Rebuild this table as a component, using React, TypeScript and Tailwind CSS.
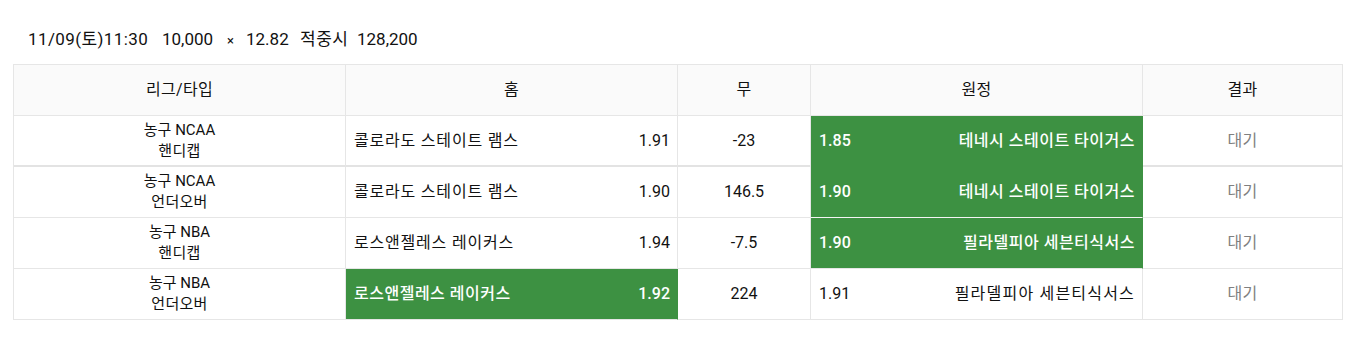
import React from 'react'

interface Row {
  league: string
  type: string
  home: string
  homeOdds: string
  mid: string
  awayOdds: string
  away: string
  result: string
  pick: 'home' | 'away'
  border: string
  awayBorder: string
}

const rows: Row[] = [
  {
    league: '농구 NCAA', type: '핸디캡', home: '콜로라도 스테이트 램스', homeOdds: '1.91', mid: '-23',
    awayOdds: '1.85', away: '테네시 스테이트 타이거스', result: '대기', pick: 'away',
    border: 'border-b-2 border-b-[#e3e3e3]', awayBorder: 'border-b-2 border-b-[#3d9142]',
  },
  {
    league: '농구 NCAA', type: '언더오버', home: '콜로라도 스테이트 램스', homeOdds: '1.90', mid: '146.5',
    awayOdds: '1.90', away: '테네시 스테이트 타이거스', result: '대기', pick: 'away',
    border: 'border-b border-b-[#e6e6e6]', awayBorder: 'border-b border-b-[#f4f4f4]',
  },
  {
    league: '농구 NBA', type: '핸디캡', home: '로스앤젤레스 레이커스', homeOdds: '1.94', mid: '-7.5',
    awayOdds: '1.90', away: '필라델피아 세븐티식서스', result: '대기', pick: 'away',
    border: 'border-b border-b-[#e6e6e6]', awayBorder: 'border-b border-b-[#e6e6e6]',
  },
  {
    league: '농구 NBA', type: '언더오버', home: '로스앤젤레스 레이커스', homeOdds: '1.92', mid: '224',
    awayOdds: '1.91', away: '필라델피아 세븐티식서스', result: '대기', pick: 'home',
    border: 'border-b border-b-[#e6e6e6]', awayBorder: 'border-b border-b-[#e6e6e6]',
  },
]

export default function App() {
  return (
    <div
      className="min-h-screen bg-white text-[#111] pt-[27px]"
      style={{ fontFamily: 'Roboto, "Noto Sans CJK KR", sans-serif' }}
    >
      {/* bet summary */}
      <div className="pl-[28px] text-[17px] leading-[24px] h-[37px] flex items-baseline whitespace-nowrap">
        <span className="w-[134px] tracking-[0.4px]">11/09(토)11:30</span>
        <span className="w-[65px]">10,000</span>
        <span className="w-[19px] text-[13px]">×</span>
        <span className="w-[54px]">12.82</span>
        <span className="w-[57px] tracking-[0.5px]">적중시</span>
        <span>128,200</span>
      </div>

      <div className="ml-[13px] w-[1330px] border-l border-t border-[#e6e6e6] text-[16px]">
        {/* header */}
        <div className="grid grid-cols-[332px_332px_133px_332px_200px] h-[51px] bg-[#fafafa] border-b border-[#e6e6e6]">
          {['리그/타입', '홈', '무', '원정', '결과'].map((h) => (
            <div key={h} className="flex items-center justify-center border-r border-[#e6e6e6] tracking-[0.3px]">
              {h}
            </div>
          ))}
        </div>

        {rows.map((r, i) => {
          const homeOn = r.pick === 'home'
          const awayOn = r.pick === 'away'
          return (
            <div key={i} className="grid grid-cols-[332px_332px_133px_332px_200px]">
              <div className={`h-[51px] flex flex-col items-center justify-center text-[15px] leading-[21px] border-r border-[#e6e6e6] ${r.border}`}>
                <span>{r.league}</span>
                <span className="tracking-[0.3px]">{r.type}</span>
              </div>
              <div
                className={`h-[51px] flex items-center justify-between pl-[8px] pr-[7px] border-r ${
                  homeOn ? 'bg-[#3d9142] text-white font-medium border-r-[#3d9142]' : 'border-[#e6e6e6]'
                } ${r.border}`}
              >
                <span className={homeOn ? 'tracking-[0.5px]' : 'tracking-[0.8px]'}>{r.home}</span>
                <span>{r.homeOdds}</span>
              </div>
              <div className={`h-[51px] flex items-center justify-center border-r border-[#e6e6e6] ${r.border}`}>
                {r.mid}
              </div>
              <div
                className={`h-[51px] flex items-center justify-between pl-[8px] pr-[7px] border-r ${
                  awayOn ? `bg-[#3d9142] text-white font-medium border-r-[#3d9142] ${r.awayBorder}` : `border-[#e6e6e6] ${r.border}`
                }`}
              >
                <span>{r.awayOdds}</span>
                <span className={awayOn ? 'tracking-[0.5px]' : 'tracking-[1.2px]'}>{r.away}</span>
              </div>
              <div className={`h-[51px] flex items-center justify-center text-[#808080] tracking-[0.3px] border-r border-[#e6e6e6] ${r.border}`}>
                {r.result}
              </div>
            </div>
          )
        })}
      </div>
    </div>
  )
}
